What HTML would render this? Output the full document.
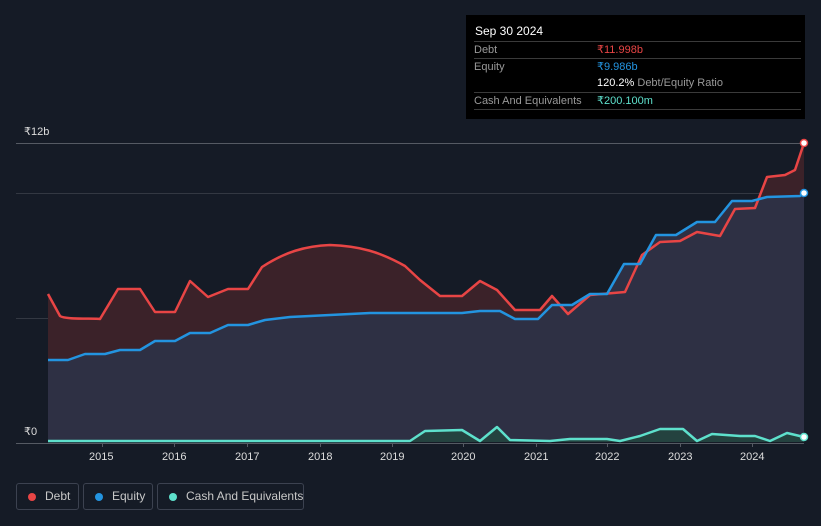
<!DOCTYPE html><html><head><style>
body{margin:0;background:#151b26;width:821px;height:526px;overflow:hidden;font-family:"Liberation Sans",sans-serif;}
.tt{position:absolute;left:466px;top:15px;width:339px;height:104px;background:#000;color:#fff;font-size:11px;}
.tt .h{position:absolute;left:9px;top:9px;font-size:12px}
.row{position:absolute;left:8px;width:327px;border-top:1px solid #3a3a3a;height:17px;line-height:17px;color:#999}
.row span{position:absolute;left:123px}
.lg{position:absolute;top:483px;height:27px;border:1px solid #3c4250;border-radius:3px;color:#c8c8c8;font-size:12px;line-height:25px;box-sizing:border-box;white-space:nowrap}
.lg i{position:absolute;left:11px;top:9px;width:8px;height:8px;border-radius:50%}
.ax{position:absolute;color:#ddd;font-size:11px}
</style></head><body>
<svg width="821" height="526" style="position:absolute;left:0;top:0">
<line x1="16" y1="143.5" x2="804" y2="143.5" stroke="#555a63"/>
<line x1="16" y1="193.5" x2="804" y2="193.5" stroke="#333842"/>
<line x1="16" y1="318.5" x2="804" y2="318.5" stroke="#333842"/>
<path d="M48,294 L60,316 C66,320 95,318 100,319 L118,289 L140,289 L155,312 L175,312 L190,281 L208,297 L228,289 L248,289 L262,267 C285,252 305,246 330,245 C360,246 380,252 405,266 L420,280 L440,296 L462,296 L480,281 L497,290 L515,310 L540,310 L552,296 L568,314 L590,295 L625,292 L642,255 L660,242 L680,241 L697,232 L720,236 L735,209 L755,208 L767,177 L785,175 L795,170 L804,143 L804,442 L48,442 Z" fill="#3b2229"/>
<path d="M48,360 L68,360 L85,354 L105,354 L120,350 L140,350 L155,341 L175,341 L190,333 L210,333 L228,325 L248,325 L265,320 L290,317 L330,315 L370,313 L462,313 L480,311 L500,311 L515,319 L538,319 L552,305 L572,305 L590,294 L607,294 L624,264 L640,264 L656,235 L676,235 L697,222 L715,222 L732,201 L752,201 L767,197 L800,196 L804,193 L804,442 L48,442 Z" fill="#2e3044"/>
<path d="M48,294 L60,316 C66,320 95,318 100,319 L118,289 L140,289 L155,312 L175,312 L190,281 L208,297 L228,289 L248,289 L262,267 C285,252 305,246 330,245 C360,246 380,252 405,266 L420,280 L440,296 L462,296 L480,281 L497,290 L515,310 L540,310 L552,296 L568,314 L590,295 L625,292 L642,255 L660,242 L680,241 L697,232 L720,236 L735,209 L755,208 L767,177 L785,175 L795,170 L804,143" fill="none" stroke="#e84545" stroke-width="2.5" stroke-linejoin="round"/>
<path d="M48,360 L68,360 L85,354 L105,354 L120,350 L140,350 L155,341 L175,341 L190,333 L210,333 L228,325 L248,325 L265,320 L290,317 L330,315 L370,313 L462,313 L480,311 L500,311 L515,319 L538,319 L552,305 L572,305 L590,294 L607,294 L624,264 L640,264 L656,235 L676,235 L697,222 L715,222 L732,201 L752,201 L767,197 L800,196 L804,193" fill="none" stroke="#2394e0" stroke-width="2.5" stroke-linejoin="round"/>
<path d="M48,441 L410,441 L425,431 L462,430 L480,441 L497,427 L510,440 L550,441 L570,439 L607,439 L620,441 L640,436 L660,429 L683,429 L697,441 L712,434 L740,436 L755,436 L770,441 L787,433 L804,437 L804,442 L48,442Z" fill="#24423f"/>
<path d="M48,441 L410,441 L425,431 L462,430 L480,441 L497,427 L510,440 L550,441 L570,439 L607,439 L620,441 L640,436 L660,429 L683,429 L697,441 L712,434 L740,436 L755,436 L770,441 L787,433 L804,437" fill="none" stroke="#5ee0cc" stroke-width="2.5" stroke-linejoin="round"/>
<line x1="16" y1="443.5" x2="804" y2="443.5" stroke="#555a63"/>
<g stroke="#555a63"><line x1="102.5" y1="443" x2="102.5" y2="447"/><line x1="174.5" y1="443" x2="174.5" y2="447"/><line x1="247.5" y1="443" x2="247.5" y2="447"/><line x1="320.5" y1="443" x2="320.5" y2="447"/><line x1="392.5" y1="443" x2="392.5" y2="447"/><line x1="463.5" y1="443" x2="463.5" y2="447"/><line x1="536.5" y1="443" x2="536.5" y2="447"/><line x1="607.5" y1="443" x2="607.5" y2="447"/><line x1="680.5" y1="443" x2="680.5" y2="447"/><line x1="752.5" y1="443" x2="752.5" y2="447"/></g>
<circle cx="804" cy="143" r="3.5" fill="#fff" stroke="#e84545" stroke-width="1.5"/>
<circle cx="804" cy="193" r="3.5" fill="#fff" stroke="#2394e0" stroke-width="1.5"/>
<circle cx="804" cy="437" r="3.5" fill="#fff" stroke="#5ee0cc" stroke-width="1.5"/>
</svg>
<div class="ax" style="left:24px;top:125px">₹12b</div>
<div class="ax" style="left:24px;top:425px">₹0</div>
<div class="ax" style="left:89px;top:451px">2015</div><div class="ax" style="left:162px;top:451px">2016</div><div class="ax" style="left:235px;top:451px">2017</div><div class="ax" style="left:308px;top:451px">2018</div><div class="ax" style="left:380px;top:451px">2019</div><div class="ax" style="left:451px;top:451px">2020</div><div class="ax" style="left:524px;top:451px">2021</div><div class="ax" style="left:595px;top:451px">2022</div><div class="ax" style="left:668px;top:451px">2023</div><div class="ax" style="left:740px;top:451px">2024</div>
<div class="tt"><div class="h">Sep 30 2024</div>
<div class="row" style="top:26px">Debt<span style="color:#e84545">₹11.998b</span></div>
<div class="row" style="top:43px">Equity<span style="color:#2394e0">₹9.986b</span></div>
<div class="row" style="top:60px;border-top:none"><span><b style="color:#fff;font-weight:normal">120.2%</b> Debt/Equity Ratio</span></div>
<div class="row" style="top:77px">Cash And Equivalents<span style="color:#5ee0cc">₹200.100m</span></div>
<div class="row" style="top:94px;height:0"></div>
</div>
<div class="lg" style="left:16px;width:63px"><i style="background:#e84545"></i><span style="position:absolute;left:28px">Debt</span></div>
<div class="lg" style="left:83px;width:70px"><i style="background:#2394e0"></i><span style="position:absolute;left:28px">Equity</span></div>
<div class="lg" style="left:157px;width:147px"><i style="background:#5ee0cc"></i><span style="position:absolute;left:28px">Cash And Equivalents</span></div>
</body></html>
